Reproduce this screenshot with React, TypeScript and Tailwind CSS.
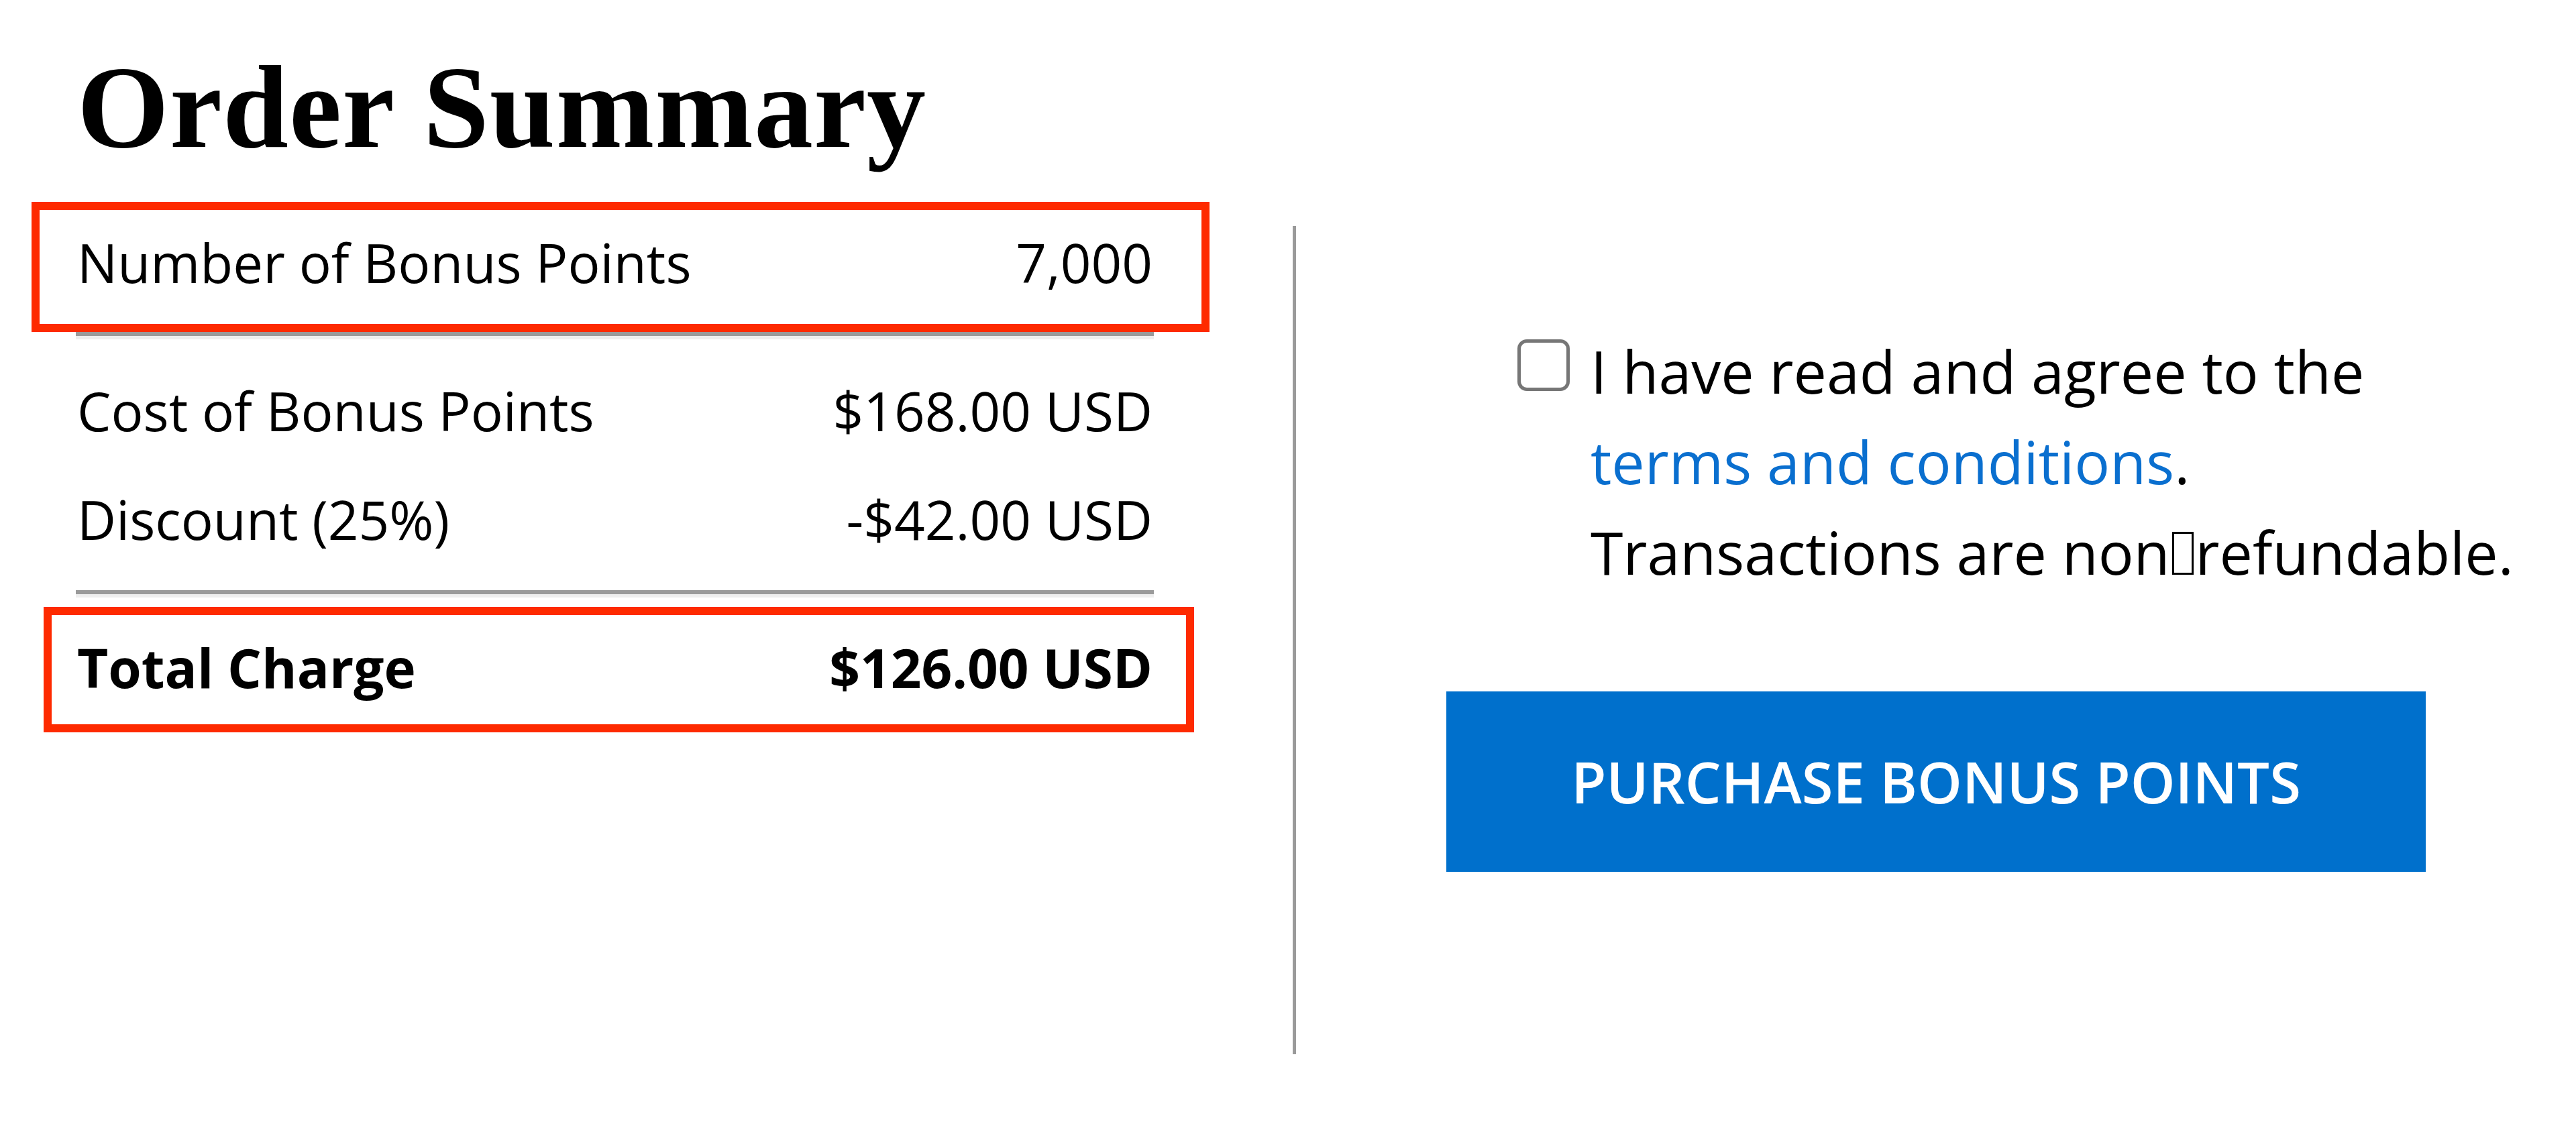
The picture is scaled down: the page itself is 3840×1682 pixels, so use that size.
import React from 'react';

const rows = [
  { label: 'Cost of Bonus Points', value: '$168.00 USD' },
  { label: 'Discount (25%)', value: '-$42.00 USD' },
];

function Rule() {
  return <div className="h-[11px] border-t-[6px] border-b-[5px] border-t-[#9a9a9a] border-b-[#eeeeee]" />;
}

export default function App() {
  const [agreed, setAgreed] = React.useState(false);

  return (
    <div className="flex min-h-screen bg-white font-['Open_Sans',sans-serif] text-black">
      {/* order summary */}
      <section className="w-[1927px] shrink-0 pl-[113px] pr-[207px] pt-[72px]">
        <h1 className="pl-[2px] font-['Liberation_Serif',serif] text-[176px] font-bold leading-none tracking-[1px]">Order Summary</h1>

        <div className="relative mt-[53px] flex h-[194px] items-center justify-between px-[2px] pb-[14px] text-[80px] leading-none">
          <span>Number of Bonus Points</span>
          <span>7,000</span>
          <div className="pointer-events-none absolute inset-y-0 -left-[66px] -right-[83px] border-[12px] border-[#fe2a00]" />
        </div>
        <Rule />

        <div className="py-[25px]">
          {rows.map((row) => (
            <div key={row.label} className="flex h-[162px] items-center justify-between px-[2px] text-[80px] leading-none">
              <span>{row.label}</span>
              <span>{row.value}</span>
            </div>
          ))}
        </div>
        <Rule />

        <div className="relative mt-[14px] flex h-[187px] items-center justify-between px-[2px] pb-[8px] text-[80px] font-bold leading-none">
          <span>Total Charge</span>
          <span>$126.00 USD</span>
          <div className="pointer-events-none absolute inset-y-0 -left-[48px] -right-[60px] border-[12px] border-[#fe2a00]" />
        </div>
      </section>

      {/* agreement + purchase */}
      <section className="mt-[337px] h-[1235px] flex-1 border-l-[5px] border-[#9a9a9a]">
        <label className="flex pl-[330px] pt-[149px]">
          <input
            type="checkbox"
            checked={agreed}
            onChange={() => setAgreed((prev) => !prev)}
            className="mt-[20px] h-[77px] w-[78px] shrink-0 appearance-none rounded-[14px] border-[5px] border-[#767676] bg-white checked:bg-[#0070cc]"
          />
          <p className="ml-[31px] text-[88px] leading-[135px]">
            I have read and agree to the
            <br />
            <a href="#" className="text-[#0a6fcf]">terms and conditions</a>.
            <br />
            Transactions are non
            <span className="mx-[3px] inline-block h-[64px] w-[32px] border-[3px] border-black align-baseline" />
            refundable.
          </p>
        </label>

        <button
          type="button"
          className="mx-auto mt-[140px] flex h-[269px] w-[1460px] items-center justify-center bg-[#0070cc] text-[85px] font-semibold text-white"
        >
          PURCHASE BONUS POINTS
        </button>
      </section>
    </div>
  );
}
